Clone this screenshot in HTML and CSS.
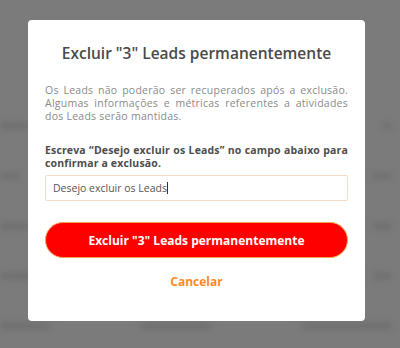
FILE: index.html
```html
<!DOCTYPE html>
<html lang="pt-BR">
<head>
<meta charset="utf-8">
<link rel="stylesheet" href="styles.css">
</head>
<body>
<div class="page">
  <div class="bg">
    <div class="bg-row"><span class="w30"></span><span class="w10"></span><span class="w10"></span></div>
    <div class="bg-row"><span class="w20"></span><span class="w10"></span><span class="w20"></span></div>
    <div class="bg-row"><span class="w30"></span><span class="w10"></span><span class="w20"></span></div>
    <div class="bg-row"><span class="w50"></span><span class="w10"></span><span class="w20"></span></div>
    <div class="bg-row"><span class="w50"></span><span class="w70"></span><span class="w90"></span></div>
  </div>
  <div class="overlay">
    <div class="modal">
      <h1 class="title">Excluir "3" Leads permanentemente</h1>
      <p class="desc">Os Leads não poderão ser recuperados após a exclusão. Algumas informações e métricas referentes a atividades dos Leads serão mantidas.</p>
      <p class="label">Escreva “Desejo excluir os Leads” no campo abaixo para confirmar a exclusão.</p>
      <div class="input">Desejo excluir os Leads<span class="caret"></span></div>
      <button class="btn-danger">Excluir "3" Leads permanentemente</button>
      <button class="btn-link">Cancelar</button>
    </div>
  </div>
</div>
</body>
</html>
```
FILE: styles.css
```css
html, body {
  margin: 0;
  padding: 0;
}
body {
  width: 400px;
  height: 348px;
  overflow: hidden;
  font-family: "Open Sans", "Liberation Sans", sans-serif;
  background: #7b7b7b;
}
.page {
  position: relative;
  width: 400px;
  height: 348px;
  overflow: hidden;
}
.bg {
  box-sizing: border-box;
  height: 348px;
  overflow: hidden;
  display: flex;
  flex-direction: column;
  gap: 44px;
  padding: 123px 0 0 0;
  filter: blur(3px);
}
.bg-row {
  display: flex;
  justify-content: space-between;
  padding: 0 8px 0 0;
}
.bg-row span {
  height: 6px;
  background: #6e6e6e;
  border-radius: 3px;
}
.w10 { width: 10px; }
.w20 { width: 20px; }
.w30 { width: 30px; }
.w50 { width: 50px; }
.w70 { width: 70px; }
.w90 { width: 90px; }
.overlay {
  position: absolute;
  inset: 0;
  padding: 20px 35px 0 28px;
}
.modal {
  box-sizing: border-box;
  width: 337px;
  height: 301px;
  background: #fff;
  border-radius: 4px;
  padding: 0 17px;
  display: flex;
  flex-direction: column;
}
.title {
  margin: 22px 0 0;
  text-align: center;
  font-size: 15.5px;
  font-weight: 600;
  color: #4a4a4a;
  line-height: 22px;
}
.desc {
  margin: 20px 0 0;
  font-size: 10.5px;
  letter-spacing: 0.25px;
  line-height: 13px;
  color: #8a8a8a;
  text-align: justify;
}
.label {
  margin: 21px 0 0;
  font-size: 10.5px;
  letter-spacing: 0.15px;
  line-height: 13px;
  font-weight: 700;
  color: #4d4d4d;
  text-align: justify;
}
.input {
  margin-top: 5px;
  height: 26px;
  box-sizing: border-box;
  border: 1px solid #f6d9c6;
  border-radius: 2px;
  padding: 0 7px;
  display: flex;
  align-items: center;
  font-size: 10.5px;
  color: #555;
}
.caret {
  display: inline-block;
  width: 1px;
  height: 12px;
  background: #333;
}
.btn-danger {
  margin-top: 21px;
  height: 36px;
  border: 1px solid #f2a24a;
  border-radius: 18px;
  background: #ff0000;
  color: #fff;
  font-family: inherit;
  font-size: 12px;
  font-weight: 700;
  padding: 0;
}
.btn-link {
  margin-top: 15px;
  align-self: center;
  background: none;
  border: 0;
  padding: 0;
  font-family: inherit;
  font-size: 12px;
  font-weight: 700;
  color: #ff8a1f;
}
```
